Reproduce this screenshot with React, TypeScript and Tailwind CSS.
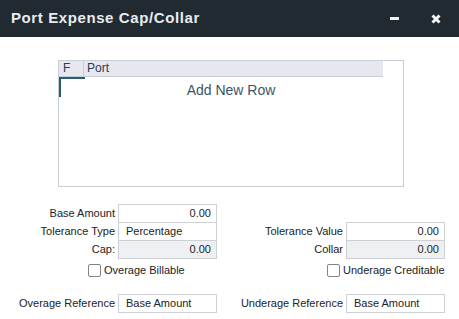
import React from "react";

function Field({ value, align = "right", disabled = false }: { value: string; align?: "left" | "right"; disabled?: boolean }) {
  return (
    <div
      className={`w-[99px] h-[19px] border border-[#cdd1d6] flex items-center text-[11px] text-[#222] whitespace-nowrap ${
        disabled ? "bg-[#eff0f2]" : "bg-white"
      } ${align === "right" ? "justify-end pr-[5px]" : "justify-start pl-[7px]"}`}
    >
      {value}
    </div>
  );
}

function Check({ label }: { label: string }) {
  return (
    <div className="flex items-center gap-[3px] whitespace-nowrap">
      <div className="w-[13px] h-[13px] border border-[#7e848b] rounded-[2px] bg-white" />
      <span className="text-[11px] text-[#222] leading-none">{label}</span>
    </div>
  );
}

export default function App() {
  return (
    <div
      className="w-[459px] h-[319px] bg-white overflow-hidden flex flex-col"
      style={{ fontFamily: '"Liberation Sans", Arial, sans-serif' }}
    >
      <div className="h-[37px] bg-[#222a31] flex items-center justify-between pl-[11px] pr-[18px] shrink-0">
        <span className="text-[15px] font-bold tracking-[0.6px] text-[#e8ecf2]">Port Expense Cap/Collar</span>
        <div className="flex items-center gap-[32px]">
          <div className="w-[9px] h-[3px] bg-[#f2f4f6]" />
          <svg width="10" height="10" viewBox="0 0 10 10">
            <path d="M1.5 1.5 L8.5 8.5 M8.5 1.5 L1.5 8.5" stroke="#f2f4f6" strokeWidth="3" strokeLinecap="butt" />
          </svg>
        </div>
      </div>

      <div className="mt-[23px] ml-[58px] w-[346px] h-[127px] border border-[#c8ced6] shrink-0">
        <div className="flex w-[324px] h-[16px] bg-[#e6e7ef] border-b border-[#c8ced6] text-[12px] text-[#2d3b4a] leading-[15px]">
          <div className="w-[25px] border-r border-[#c8ced6] pl-[4px]">F</div>
          <div className="pl-[3px]">Port</div>
        </div>
        <div className="relative h-[26px] flex items-center justify-center text-[14px] text-[#3c5566]">
          <div className="absolute left-0 top-0 w-[26px] h-[2px] bg-[#2b5a74]" />
          <div className="absolute left-0 top-0 w-[2px] h-[20px] bg-[#2b5a74]" />
          Add New Row
        </div>
      </div>

      <div className="mt-[17px] flex flex-col text-[11px] text-[#222]">
        <div className="flex h-[18px] items-start">
          <div className="w-[115px] text-right leading-[19px]">Base Amount</div>
          <div className="ml-[3px]"><Field value="0.00" /></div>
        </div>
        <div className="flex h-[18px] items-start">
          <div className="w-[115px] text-right leading-[19px]">Tolerance Type</div>
          <div className="ml-[3px]"><Field value="Percentage" align="left" /></div>
          <div className="w-[126px] text-right leading-[19px]">Tolerance Value</div>
          <div className="ml-[3px]"><Field value="0.00" /></div>
        </div>
        <div className="flex h-[18px] items-start">
          <div className="w-[115px] text-right leading-[19px]">Cap:</div>
          <div className="ml-[3px]"><Field value="0.00" disabled /></div>
          <div className="w-[126px] text-right leading-[19px]">Collar</div>
          <div className="ml-[3px]"><Field value="0.00" disabled /></div>
        </div>
        <div className="flex h-[18px] items-center mt-[3px]">
          <div className="ml-[88px] w-[239px]"><Check label="Overage Billable" /></div>
          <div><Check label="Underage Creditable" /></div>
        </div>
        <div className="flex items-center mt-[15px]">
          <div className="w-[115px] text-right">Overage Reference</div>
          <div className="ml-[3px]"><Field value="Base Amount" align="left" /></div>
          <div className="w-[126px] text-right">Underage Reference</div>
          <div className="ml-[3px]"><Field value="Base Amount" align="left" /></div>
        </div>
      </div>
    </div>
  );
}
